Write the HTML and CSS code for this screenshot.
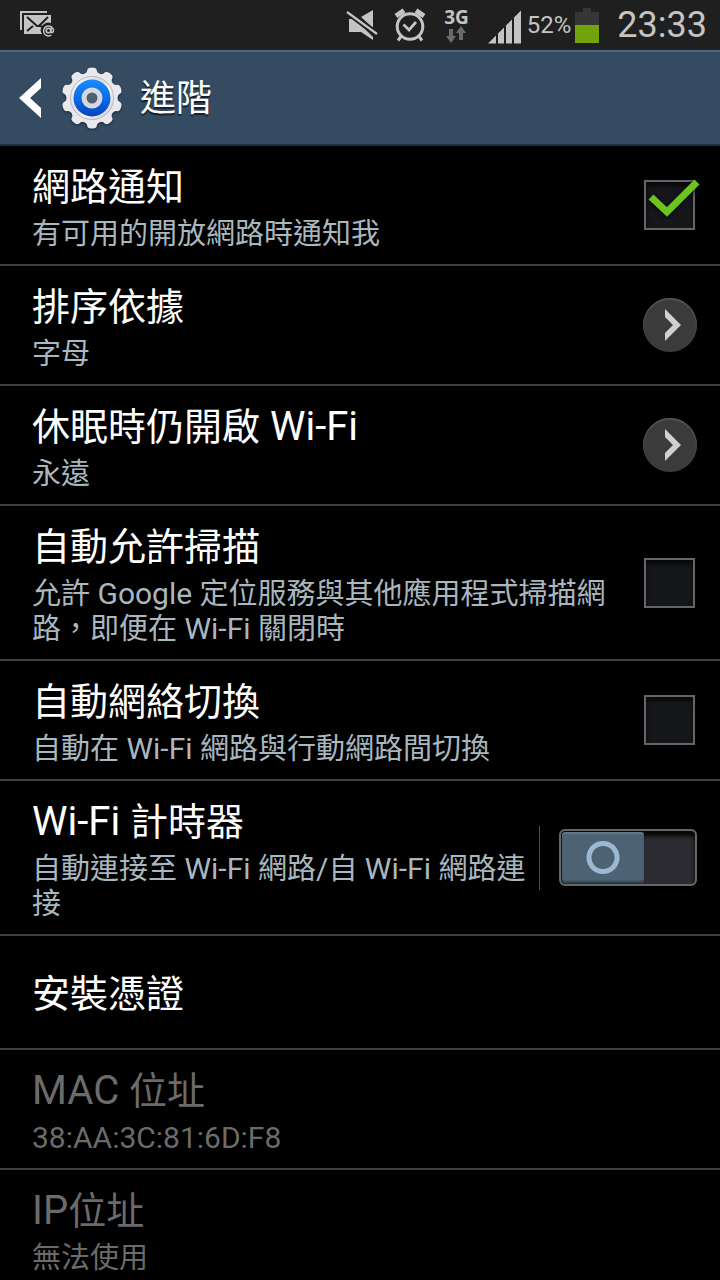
FILE: index.html
```html
<!DOCTYPE html>
<html lang="zh-Hant">
<head>
<meta charset="utf-8">
<meta name="viewport" content="width=device-width, initial-scale=1">
<title>進階</title>
<link rel="stylesheet" href="styles.css">
</head>
<body>
<div class="screen">
  <div class="status">
    <svg class="mail-icon" width="36" height="28" viewBox="0 0 36 28" aria-hidden="true">
      <path d="M1 19V1h26" fill="none" stroke="#c4c4c4" stroke-width="2"/>
      <path d="M4 4h27v8a7.500 7.500 0 0 0-9 11H4z" fill="#c4c4c4"/>
      <path d="M7 6l10 9h2l9-9M7 20l6-5" fill="none" stroke="#1f1f1f" stroke-width="2"/>
      <path d="M19 14l3 2" stroke="#1f1f1f" stroke-width="2"/>
      <circle cx="28.500" cy="19.500" r="2.300" fill="none" stroke="#c4c4c4" stroke-width="1.600"/>
      <path d="M31 16.800v3.400q.2 1.600 1.500 1.300 1.200-.5 1-2.500a5 5 0 1 0-2 5" fill="none" stroke="#c4c4c4" stroke-width="1.500"/>
    </svg>
    <div class="status-right">
      <svg width="32" height="32" viewBox="0 0 32 32" aria-hidden="true">
        <path d="M3 10h6l18 18v3L15 23H3zM15 8l12-7v18z" fill="#c4c4c4"/>
        <path d="M0 2l32 24" stroke="#1f1f1f" stroke-width="6"/>
        <path d="M1 3l30 22" stroke="#c4c4c4" stroke-width="2.200"/>
      </svg>
      <svg class="alarm-icon" width="32" height="34" viewBox="0 0 32 34" fill="none" stroke="#c4c4c4" aria-hidden="true">
        <circle cx="16" cy="18.500" r="12.800" stroke-width="3"/>
        <path d="M9.500 16.500l5.500 5.500 7-8" stroke-width="2.800"/>
        <path d="M2 8l8-5.500M30 8l-8-5.500" stroke-width="5"/>
        <path d="M7 28.500l-3 4M25 28.500l3 4" stroke-width="3"/>
      </svg>
      <div class="network">
        <span>3G</span>
        <svg width="20" height="17" viewBox="0 0 20 17" fill="#6b6b6b" aria-hidden="true">
          <path d="M3 3h4v7h3l-5 7-5-7h3zM13 14V7h-3l5-7 5 7h-3v7z"/>
        </svg>
      </div>
      <svg class="signal-icon" width="34" height="34" viewBox="0 0 34 34" fill="#c4c4c4" aria-hidden="true">
        <path d="M0 33.500l8-8v8zM10 23.500l6-6v16h-6zM18 15.500l6-6v24h-6zM26 7.500l7-7v33h-7z"/>
      </svg>
      <span class="percent">52%</span>
      <svg class="battery-icon" width="24" height="35" viewBox="0 0 24 35" aria-hidden="true">
        <path d="M0 4h8V0h8v4h8v13H0z" fill="#363636"/>
        <path d="M0 17h24v18H0z" fill="#72a30a"/>
      </svg>
      <time class="clock">23:33</time>
    </div>
  </div>

  <header class="header">
    <button class="back" type="button" aria-label="返回">
      <svg width="22" height="40" viewBox="0 0 22 40" aria-hidden="true"><path d="M22 0v10L11 20l11 10v10L0 20z" fill="#fff"/></svg>
    </button>
    <svg class="gear" width="62" height="62" viewBox="-31 -31 62 62" aria-hidden="true">
      <defs>
        <linearGradient id="metal" x1="0" y1="0" x2="1" y2="1">
          <stop offset="0" stop-color="#fff"/><stop offset=".4" stop-color="#dcdde2"/><stop offset=".6" stop-color="#f6f6f8"/><stop offset="1" stop-color="#c9cad0"/>
        </linearGradient>
        <linearGradient id="blue" x1="0" y1="0" x2="0" y2="1">
          <stop offset="0" stop-color="#1b8cfb"/><stop offset=".5" stop-color="#0a6bea"/><stop offset="1" stop-color="#0743b8"/>
        </linearGradient>
        <path id="tooth" d="M-8-24Q-5-25-4.600-28.500-4-30.500 0-30.500T4.600-28.500Q5-25 8-24z"/>
      </defs>
      <g fill="#e9e9ed">
        <circle r="25.500"/>
        <use href="#tooth"/><use href="#tooth" transform="rotate(36)"/><use href="#tooth" transform="rotate(72)"/><use href="#tooth" transform="rotate(108)"/><use href="#tooth" transform="rotate(144)"/><use href="#tooth" transform="rotate(180)"/><use href="#tooth" transform="rotate(216)"/><use href="#tooth" transform="rotate(252)"/><use href="#tooth" transform="rotate(288)"/><use href="#tooth" transform="rotate(324)"/>
      </g>
      <circle r="21.500" fill="url(#metal)" stroke="#b4b6c0" stroke-width="1"/>
      <circle r="18.500" fill="url(#blue)"/>
      <circle r="8" fill="#506174" stroke="#d5d8e0" stroke-width="5"/>
    </svg>
    <h1>進階</h1>
  </header>

  <main class="list">
    <label class="row">
      <span class="text"><span class="title">網路通知</span><span class="sub">有可用的開放網路時通知我</span></span>
      <span class="box"><input type="checkbox" checked>
        <svg class="tick" width="52" height="40" viewBox="0 0 52 40" aria-hidden="true"><path d="M3 18l16 15L49 3" fill="none" stroke="#6cc41e" stroke-width="7"/></svg>
      </span>
    </label>

    <button class="row" type="button">
      <span class="text"><span class="title">排序依據</span><span class="sub">字母</span></span>
      <span class="arrow"><svg width="16" height="32" viewBox="0 0 16 32" aria-hidden="true"><path d="M0 0v8l8 8-8 8v8l16-16z" fill="#d0d0d0"/></svg></span>
    </button>

    <button class="row" type="button">
      <span class="text"><span class="title">休眠時仍開啟<span class="latin"> Wi-Fi</span></span><span class="sub">永遠</span></span>
      <span class="arrow"><svg width="16" height="32" viewBox="0 0 16 32" aria-hidden="true"><path d="M0 0v8l8 8-8 8v8l16-16z" fill="#d0d0d0"/></svg></span>
    </button>

    <label class="row">
      <span class="text"><span class="title">自動允許掃描</span><span class="sub">允許<span class="latin"> Google </span>定位服務與其他應用程式掃描網路，即便在<span class="latin"> Wi-Fi </span>關閉時</span></span>
      <span class="box"><input type="checkbox">
        <svg class="tick" width="52" height="40" viewBox="0 0 52 40" aria-hidden="true"><path d="M3 18l16 15L49 3" fill="none" stroke="#6cc41e" stroke-width="7"/></svg>
      </span>
    </label>

    <label class="row">
      <span class="text"><span class="title">自動網絡切換</span><span class="sub">自動在<span class="latin"> Wi-Fi </span>網路與行動網路間切換</span></span>
      <span class="box"><input type="checkbox">
        <svg class="tick" width="52" height="40" viewBox="0 0 52 40" aria-hidden="true"><path d="M3 18l16 15L49 3" fill="none" stroke="#6cc41e" stroke-width="7"/></svg>
      </span>
    </label>

    <label class="row">
      <span class="text"><span class="title"><span class="latin">Wi-Fi </span>計時器</span><span class="sub">自動連接至<span class="latin"> Wi-Fi </span>網路<span class="latin">/</span>自<span class="latin"> Wi-Fi </span>網路連接</span></span>
      <span class="switch-area"><input class="switch" type="checkbox" role="switch"></span>
    </label>

    <button class="row" type="button">
      <span class="text"><span class="title">安裝憑證</span></span>
    </button>

    <div class="row disabled">
      <span class="text"><span class="title"><span class="latin">MAC </span>位址</span><span class="sub"><span class="latin">38:AA:3C:81:6D:F8</span></span></span>
    </div>

    <div class="row disabled">
      <span class="text"><span class="title"><span class="latin">IP</span>位址</span><span class="sub">無法使用</span></span>
    </div>
  </main>
</div>
</body>
</html>
```
FILE: styles.css
```css
* { box-sizing: border-box; }

body {
  margin: 0;
  background: #000;
  color: #fff;
  font-family: Roboto, "Noto Sans CJK TC", sans-serif;
}

button {
  font: inherit;
  color: inherit;
  background: none;
  border: 0;
  padding: 0;
  text-align: left;
}

svg { display: block; flex: none; }

.screen {
  display: flex;
  flex-direction: column;
  height: 100vh;
}

/* Status bar */
.status {
  flex: none;
  display: flex;
  align-items: center;
  justify-content: space-between;
  height: 50px;
  padding: 0 13px 0 20px;
  background: #1f1f1f;
  color: #c4c4c4;
}

.status-right {
  display: flex;
  align-items: center;
}

.mail-icon { margin-bottom: 1px; }
.alarm-icon { margin-left: 16px; }

.network {
  display: flex;
  flex-direction: column;
  align-items: center;
  margin-left: 18px;
  font: 700 19px/18px "Open Sans", sans-serif;
}

.signal-icon { margin: 4px 5px 0 19px; }
.percent { font-size: 24px; }
.battery-icon { margin: 0 18px 0 4px; }
.clock { font-size: 36px; line-height: 48px; }

/* Title bar */
.header {
  flex: none;
  display: flex;
  align-items: center;
  height: 96px;
  padding-left: 19px;
  background: #344b61;
  border-top: 2px solid #50687e;
  border-bottom: 2px solid #1f303d;
}

.back { margin-right: 20px; }
.gear { filter: drop-shadow(0 1px 1px rgba(0, 0, 0, .5)); }

h1 {
  margin: 2px 0 0 17px;
  font-size: 36px;
  line-height: 48px;
  font-weight: 400;
  text-shadow: 0 2px 1px rgba(0, 0, 0, .6);
}

/* Settings list */
.list {
  flex: 1;
  min-height: 0;
  overflow-y: auto;
  scrollbar-width: none;
}

.row {
  display: flex;
  align-items: center;
  width: 100%;
  min-height: 114px;
  padding: 12px 23px 12px 32px;
  border-bottom: 2px solid #404040;
}

.text {
  flex: 1;
  display: flex;
  flex-direction: column;
  gap: 5px;
  padding-top: 4px;
}

.title { font-size: 38px; line-height: 50px; }
.sub { font-size: 29px; line-height: 35px; color: #a9b7bf; }
.latin { line-height: 1; }
.title .latin { font-size: 40px; }
.sub .latin { font-size: 30px; }
.disabled, .disabled .sub { color: #6b6b6b; }

/* Check box */
.box {
  position: relative;
  flex: none;
  margin: 0 2px 0 16px;
}

.box input {
  appearance: none;
  display: block;
  width: 51px;
  height: 50px;
  margin: 0;
  border: 2px solid #666;
  background: #15171b;
  box-shadow: inset 0 4px 4px #08090a;
}

.tick {
  display: none;
  position: absolute;
  left: 4px;
  top: -1px;
  filter: drop-shadow(0 1px 2px #000);
}

.box input:checked + .tick { display: block; }

/* Round arrow */
.arrow {
  flex: none;
  display: flex;
  align-items: center;
  justify-content: center;
  width: 54px;
  height: 54px;
  padding-left: 5px;
  border-radius: 50%;
  background: #3b3b3b;
  box-shadow: inset 0 1px 2px #666;
}

/* Switch */
.switch-area {
  flex: none;
  display: flex;
  align-items: center;
  height: 64px;
  margin-left: 12px;
  padding-left: 19px;
  border-left: 1px solid #4a4a4a;
}

.switch {
  appearance: none;
  display: flex;
  width: 138px;
  height: 57px;
  margin: 0;
  padding: 1px;
  border: 2px solid #666;
  border-radius: 6px;
  background: #2b2b31;
  box-shadow: inset 0 5px 4px #050505;
}

.switch::before {
  content: "";
  width: 82px;
  border-radius: 3px;
  background: radial-gradient(circle, transparent 11px, #9db9d2 12px, #9db9d2 16px, transparent 17px), #4d6374;
  box-shadow: inset 0 2px 1px #637988, inset 0 -2px 2px #32434f;
}

.switch:checked { justify-content: flex-end; }
```
